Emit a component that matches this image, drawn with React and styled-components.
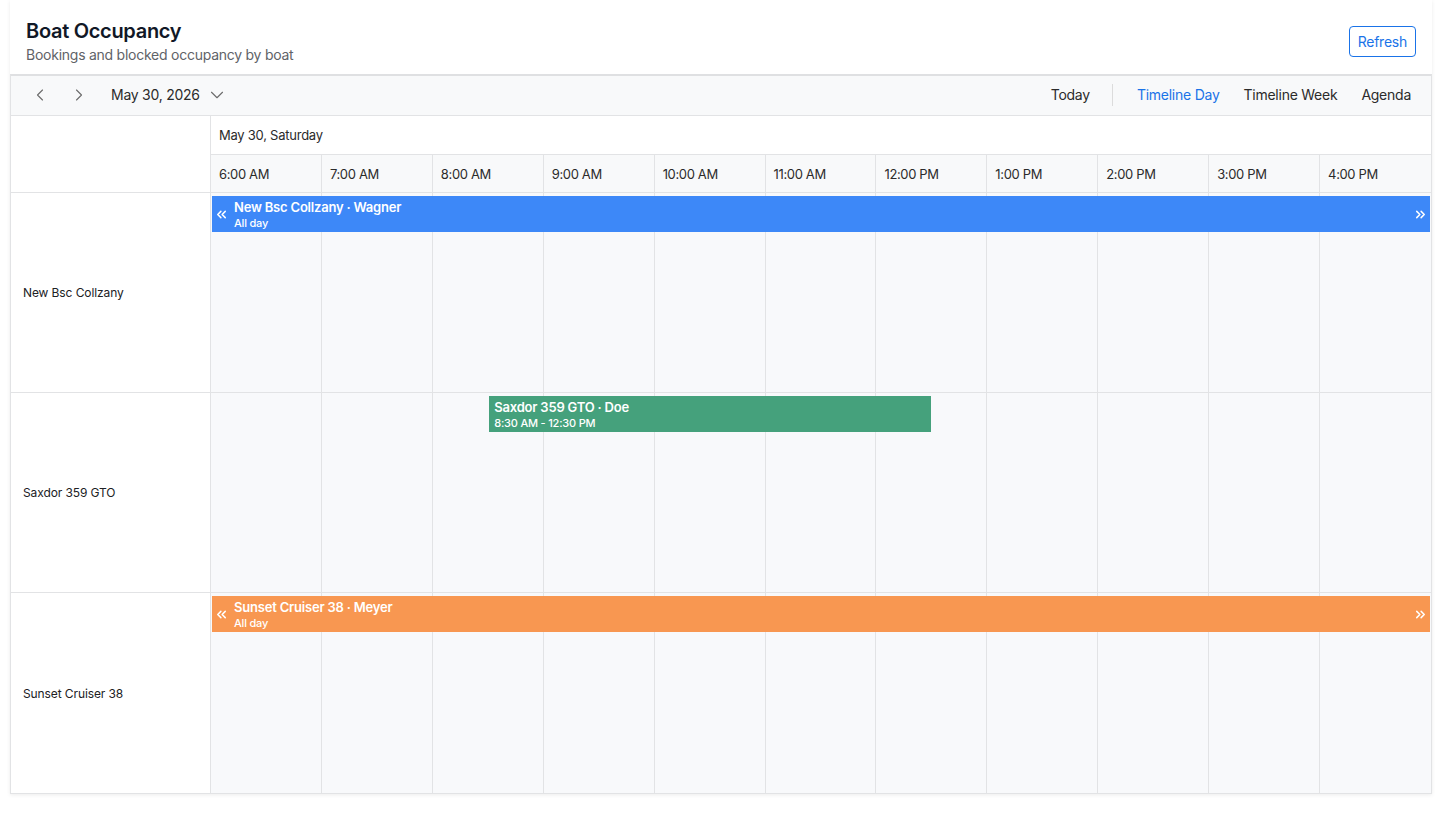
import React from "react";
import styled, { createGlobalStyle } from "styled-components";
import { ChevronLeft, ChevronRight, ChevronDown, ChevronsLeft, ChevronsRight } from "lucide-react";

const GlobalStyle = createGlobalStyle`
    * { box-sizing: border-box; }
    body {
        margin: 0;
        background: #ffffff;
        font-family: Inter, "Liberation Sans", Arial, sans-serif;
        letter-spacing: -0.25px;
        color: #202124;
    }
`;

const HOURS = ["6:00 AM", "7:00 AM", "8:00 AM", "9:00 AM", "10:00 AM", "11:00 AM", "12:00 PM", "1:00 PM", "2:00 PM", "3:00 PM", "4:00 PM"];
const START_HOUR = 6;

const boats = [
    {
        name: "New Bsc Collzany",
        event: { title: "New Bsc Collzany · Wagner", sub: "All day", color: "#3d88f8", from: 6, to: 17, allDay: true },
    },
    {
        name: "Saxdor 359 GTO",
        event: { title: "Saxdor 359 GTO · Doe", sub: "8:30 AM - 12:30 PM", color: "#45a17c", from: 8.5, to: 12.5 },
    },
    {
        name: "Sunset Cruiser 38",
        event: { title: "Sunset Cruiser 38 · Meyer", sub: "All day", color: "#f89751", from: 6, to: 17, allDay: true },
    },
];

const Page = styled.div`
    padding: 0 10px 20px;
`;

const Card = styled.div`
    background: #fff;
    box-shadow: 0 1px 4px rgba(0, 0, 0, 0.08);
`;

const Header = styled.div`
    display: flex;
    justify-content: space-between;
    align-items: flex-start;
    padding: 18px 16px 9px;
`;

const Title = styled.h1`
    margin: 0;
    font-size: 20px;
    line-height: 27px;
    font-weight: 600;
    letter-spacing: -0.3px;
    color: #111827;
`;

const Subtitle = styled.div`
    font-size: 14px;
    line-height: 20px;
    color: #5f6368;
`;

const RefreshButton = styled.button`
    margin-top: 8px;
    height: 31px;
    padding: 0 8px;
    border: 1px solid #1a73e8;
    border-radius: 4px;
    background: #fff;
    color: #1a73e8;
    font-family: inherit;
    font-size: 14px;
    letter-spacing: -0.25px;
    cursor: pointer;
`;

const Scheduler = styled.div`
    border: 1px solid #e2e3e5;
    border-top: 2px solid #dfe0e2;
`;

const Toolbar = styled.div`
    display: flex;
    align-items: center;
    height: 40px;
    padding: 0 20px 2px 18px;
    background: #f8f9fa;
    border-bottom: 1px solid #e2e3e5;
    font-size: 14px;
    color: #2b2b2b;
`;

const NavButton = styled.span`
    display: flex;
    align-items: center;
    justify-content: center;
    width: 22px;
    margin-right: 17px;
    color: #6b6b6b;
`;

const DatePicker = styled.span`
    display: flex;
    align-items: center;
    gap: 6px;
    margin-left: 4px;
`;

const Spacer = styled.div`
    flex: 1;
`;

const ViewButton = styled.span`
    margin-left: 24px;
    color: ${props => props.$active ? "#1a73e8" : "#2b2b2b"};
`;

const Divider = styled.span`
    width: 1px;
    height: 22px;
    margin-left: 22px;
    background: #dcdcdc;
`;

const Grid = styled.div`
    display: grid;
    grid-template-columns: 200px repeat(${HOURS.length}, 1fr);
`;

const Corner = styled.div`
    grid-row: span 2;
    background: #fff;
    border-right: 1px solid #e2e3e5;
    border-bottom: 1px solid #e2e3e5;
`;

const DayHeader = styled.div`
    grid-column: span ${HOURS.length};
    height: 39px;
    display: flex;
    align-items: center;
    padding: 0 0 0 8px;
    font-size: 13px;
    color: #2b2b2b;
    border-bottom: 1px solid #e2e3e5;
`;

const HourCell = styled.div`
    height: 38px;
    display: flex;
    align-items: center;
    padding: 0 0 0 8px;
    font-size: 13px;
    letter-spacing: -0.35px;
    color: #2b2b2b;
    background: #f8f9fa;
    border-bottom: 1px solid #e2e3e5;
    border-right: ${props => props.$last ? "none" : "1px solid #e2e3e5"};
`;

const ResourceCell = styled.div`
    height: 200px;
    display: flex;
    align-items: center;
    padding-left: 12px;
    font-size: 12px;
    letter-spacing: -0.1px;
    color: #202124;
    background: #fff;
    border-right: 1px solid #e2e3e5;
    border-bottom: ${props => props.$last ? "none" : "1px solid #e2e3e5"};
`;

const Lane = styled.div`
    grid-column: span ${HOURS.length};
    position: relative;
    display: grid;
    grid-template-columns: repeat(${HOURS.length}, 1fr);
    border-bottom: ${props => props.$last ? "none" : "1px solid #e2e3e5"};
`;

const WorkCell = styled.div`
    background: #f8f9fb;
    border-right: ${props => props.$last ? "none" : "1px solid #e2e3e5"};
`;

const Event = styled.div`
    position: absolute;
    top: 3px;
    height: 36px;
    display: flex;
    align-items: center;
    padding: 0 ${props => props.$allDay ? "2px" : "4px"};
    background: ${props => props.$color};
    color: #fff;
    overflow: hidden;
`;

const EventText = styled.div`
    flex: 1;
    display: flex;
    flex-direction: column;
    padding: 2px 0 0 ${props => props.$indent ? "5px" : "1px"};
`;

const EventTitle = styled.div`
    font-size: 13px;
    line-height: 17px;
    font-weight: 600;
    letter-spacing: -0.2px;
`;

const EventSub = styled.div`
    font-size: 11px;
    line-height: 15px;
    font-weight: 500;
    letter-spacing: -0.2px;
`;

function Booking({ event }) {
    const span = HOURS.length;
    const left = ((event.from - START_HOUR) / span) * 100;
    const width = ((event.to - event.from) / span) * 100;
    return (
        <Event $allDay={event.allDay} $color={event.color} style={{ left: `calc(${left}% + 1px)`, width: `calc(${width}% - 2px)` }}>
            {event.allDay && <ChevronsLeft size={15} strokeWidth={2.4} />}
            <EventText $indent={event.allDay}>
                <EventTitle>{event.title}</EventTitle>
                <EventSub>{event.sub}</EventSub>
            </EventText>
            {event.allDay && <ChevronsRight size={15} strokeWidth={2.4} />}
        </Event>
    );
}

export default function App() {
    return (
        <Page>
            <GlobalStyle />
            <Card>
                <Header>
                    <div>
                        <Title>Boat Occupancy</Title>
                        <Subtitle>Bookings and blocked occupancy by boat</Subtitle>
                    </div>
                    <RefreshButton>Refresh</RefreshButton>
                </Header>
                <Scheduler>
                    <Toolbar>
                        <NavButton><ChevronLeft size={20} strokeWidth={1.3} /></NavButton>
                        <NavButton><ChevronRight size={20} strokeWidth={1.3} /></NavButton>
                        <DatePicker>
                            May 30, 2026
                            <ChevronDown size={22} strokeWidth={1.2} color="#6b6b6b" />
                        </DatePicker>
                        <Spacer />
                        <ViewButton>Today</ViewButton>
                        <Divider />
                        <ViewButton $active>Timeline Day</ViewButton>
                        <ViewButton>Timeline Week</ViewButton>
                        <ViewButton>Agenda</ViewButton>
                    </Toolbar>
                    <Grid>
                        <Corner />
                        <DayHeader>May 30, Saturday</DayHeader>
                        {HOURS.map((h, i) => (
                            <HourCell key={h} $last={i === HOURS.length - 1}>{h}</HourCell>
                        ))}
                        {boats.map((boat, r) => {
                            const last = r === boats.length - 1;
                            return (
                                <React.Fragment key={boat.name}>
                                    <ResourceCell $last={last}>{boat.name}</ResourceCell>
                                    <Lane $last={last}>
                                        {HOURS.map((h, i) => (
                                            <WorkCell key={h} $last={i === HOURS.length - 1} />
                                        ))}
                                        <Booking event={boat.event} />
                                    </Lane>
                                </React.Fragment>
                            );
                        })}
                    </Grid>
                </Scheduler>
            </Card>
        </Page>
    );
}
